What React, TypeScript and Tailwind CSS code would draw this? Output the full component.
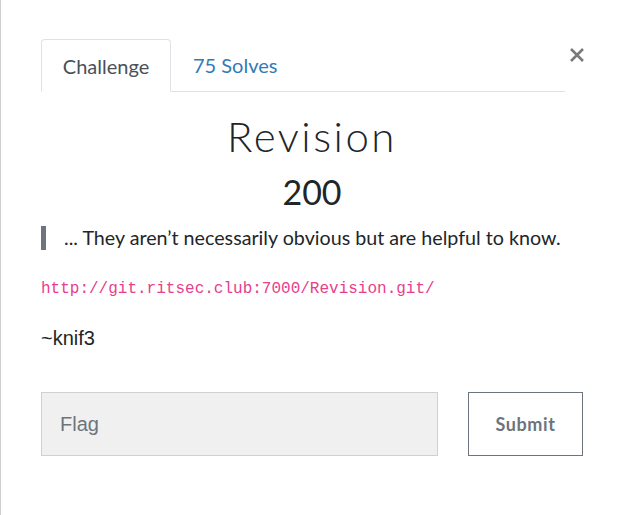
export default function App() {
  return (
    <div className="min-h-[515px] w-[622px] bg-white border-l border-[#cfcfcf] font-['Lato',sans-serif]">
      <div className="pl-10 pr-[39px] pt-[38px]">
        <div className="flex items-start">
          <div className="flex flex-1 border-b border-[#dee2e6]">
            <div className="-mb-px mt-px h-[53px] w-[130px] flex items-center justify-center rounded-t border border-[#dee2e6] border-b-white bg-white text-[20px] text-[#495057]">
              <span>Challenge</span>
            </div>
            <div className="h-[53px] px-[22px] flex items-center text-[20px] text-[#337ab7]">
              <span>75 Solves</span>
            </div>
          </div>
          <div className="w-[18px] pl-1 pt-[9px]">
            <svg width="16" height="16" viewBox="0 0 16 16">
              <path d="M2 2 L14 14 M14 2 L2 14" stroke="#7a7a7a" strokeWidth="2.6" />
            </svg>
          </div>
        </div>

        <h1 className="mt-[20px] text-center text-[42px] leading-[48px] font-light tracking-[2.5px] text-[#212529]">
          Revision
        </h1>
        <h2 className="mt-[12px] text-center text-[34px] leading-[40px] text-[#212529]">200</h2>

        <div className="mt-[14px] flex items-center border-l-[5px] border-[#6c757d] h-[24px] pl-[18px] text-[19.7px] text-[#212529]">
          ... They aren’t necessarily obvious but are helpful to know.
        </div>

        <div className="mt-[29px] font-['Liberation_Mono',monospace] text-[16px] leading-[20px] text-[#e83e8c]">
          http://git.ritsec.club:7000/Revision.git/
        </div>

        <div className="mt-[27px] font-['Liberation_Sans',sans-serif] text-[20px] leading-[24px] text-[#212529]">
          ~knif3
        </div>

        <div className="mt-[42px] flex">
          <div className="w-[397px] h-[64px] bg-[#f0f0f0] border border-[#d0d0d0] flex items-center pl-[18px] font-['Liberation_Sans',sans-serif] text-[20px] text-[#6c757d]">
            Flag
          </div>
          <div className="ml-[30px] w-[115px] h-[64px] border border-[#6c757d] flex items-center justify-center text-[18px] font-bold text-[#6c757d] tracking-[0.6px]">
            Submit
          </div>
        </div>
      </div>
    </div>
  );
}
